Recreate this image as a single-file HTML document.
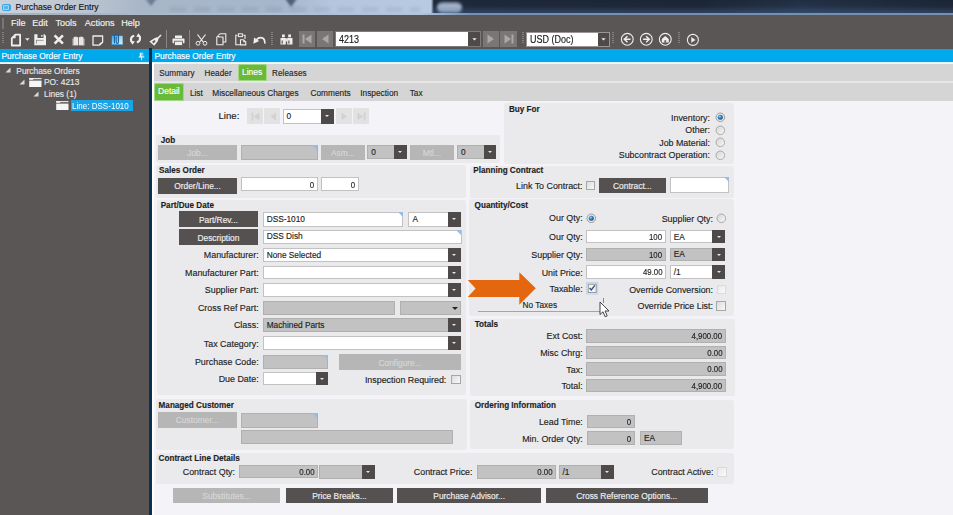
<!DOCTYPE html><html><head><meta charset="utf-8"><style>
html,body{margin:0;padding:0;width:953px;height:515px;overflow:hidden;background:#f3f3f8;font-family:"Liberation Sans",sans-serif;}
.a{position:absolute;}
.t{position:absolute;white-space:nowrap;font-family:"Liberation Sans",sans-serif;-webkit-text-stroke:0.15px currentColor;}
</style></head><body>
<div class="a" style="left:0.0px;top:0.0px;width:953.0px;height:15.0px;background:linear-gradient(90deg,#ccd2da 0px,#b8c2ce 100px,#a8b6c8 140px,#a6b6cc 275px,#aabbd2 300px,#b4c6de 330px,#b8cae2 431px,#1f2a3c 434px,#1d2737 700px,#25344a 800px,#1d2737 953px);"></div>
<svg class="a" style="left:136px;top:0px" width="180" height="14"><defs><filter id="tb" x="-50%" y="-50%" width="200%" height="200%"><feGaussianBlur stdDeviation="1.3"/></filter></defs><path d="M8 -3 L22 -3 L15 6 Z" fill="#56647a" opacity="0.7" filter="url(#tb)"/><path d="M148 -3 L162 -3 L155 7 Z" fill="#3c4a60" opacity="0.8" filter="url(#tb)"/></svg>
<div class="a" style="left:170px;top:6.5px;width:250px;height:5px;background:repeating-linear-gradient(90deg,rgba(70,85,110,0.10) 0px,rgba(70,85,110,0.10) 16px,rgba(0,0,0,0) 16px,rgba(0,0,0,0) 24px);filter:blur(1.5px);"></div>
<div class="a" style="left:437px;top:1.5px;width:25px;height:11px;background:#a2b2c8;border-radius:6px;filter:blur(1.5px);"></div>
<div class="a" style="left:433.0px;top:0.0px;width:520.0px;height:14.0px;background:linear-gradient(180deg,rgba(20,30,45,0.25) 0px,rgba(0,0,0,0) 6px,rgba(70,110,160,0.35) 12px);"></div>
<div class="a" style="left:0.0px;top:12.5px;width:953.0px;height:2.0px;background:linear-gradient(90deg,#a8b2be 0px,#b4c6dc 420px,#7890b0 470px,#7890b0 953px);"></div>
<div class="a" style="left:1.5px;top:3.8px;width:9.0px;height:7.7px;background:#38a6e6;border-radius:2px;"></div>
<div class="a" style="left:3.0px;top:5.3px;width:6.0px;height:4.7px;background:#9ed6f6;border-radius:1px;"></div>
<div class="a" style="left:3.8px;top:6.2px;width:4.4px;height:3.0px;background:#5ab4ea;"></div>
<div class="t" style="top:0.3px;height:14px;line-height:14px;font-size:8.6px;color:#141414;left:15.5px;">Purchase Order Entry</div>
<div class="a" style="left:0.0px;top:15.0px;width:953.0px;height:34.0px;background:#5a5656;"></div>
<div class="a" style="left:2.0px;top:18.0px;width:2.0px;height:11.0px;background:#7a7676;"></div>
<div class="t" style="top:15.8px;height:14px;line-height:14px;font-size:9.1px;color:#f2f2f2;left:11.0px;">File</div>
<div class="t" style="top:15.8px;height:14px;line-height:14px;font-size:9.1px;color:#f2f2f2;left:32.2px;">Edit</div>
<div class="t" style="top:15.8px;height:14px;line-height:14px;font-size:9.1px;color:#f2f2f2;left:55.4px;">Tools</div>
<div class="t" style="top:15.8px;height:14px;line-height:14px;font-size:9.1px;color:#f2f2f2;left:84.8px;">Actions</div>
<div class="t" style="top:15.8px;height:14px;line-height:14px;font-size:9.1px;color:#f2f2f2;left:121.2px;">Help</div>
<div class="a" style="left:0.0px;top:48.8px;width:148.7px;height:13.0px;background:#00a9ec;"></div>
<div class="a" style="left:0.0px;top:61.8px;width:148.7px;height:1.7px;background:#d2ecf8;"></div>
<div class="t" style="top:48.7px;height:14px;line-height:14px;font-size:8.4px;color:#ffffff;left:1.5px;">Purchase Order Entry</div>
<div class="a" style="left:148.7px;top:48.0px;width:3.3px;height:467.0px;background:#0b2f4f;"></div>
<div class="a" style="left:152.0px;top:48.8px;width:801.0px;height:13.0px;background:#00a9ec;"></div>
<div class="t" style="top:48.7px;height:14px;line-height:14px;font-size:8.4px;color:#ffffff;left:154.5px;">Purchase Order Entry</div>
<div class="a" style="left:0.0px;top:63.5px;width:148.7px;height:451.5px;background:#5a5656;"></div>
<div class="a" style="left:152.0px;top:61.8px;width:2.0px;height:453.2px;background:#ffffff;"></div>
<div class="a" style="left:152.0px;top:61.8px;width:801.0px;height:1.7px;background:#e4f2fa;"></div>
<div class="a" style="left:154.0px;top:63.5px;width:799.0px;height:17.5px;background:#d5d5d5;"></div>
<div class="a" style="left:154.0px;top:81.0px;width:799.0px;height:1.5px;background:#e6e6e6;"></div>
<div class="a" style="left:154.0px;top:82.5px;width:799.0px;height:18.0px;background:#d5d5d5;"></div>
<svg class="a" style="left:5.0px;top:67.3px" width="6" height="6"><path d="M5.5 0.5 L5.5 5.5 L0.5 5.5 Z" fill="#d8d8d8"/></svg>
<div class="t" style="top:63.5px;height:14px;line-height:14px;font-size:8.4px;color:#e6e6e6;left:16.3px;">Purchase Orders</div>
<svg class="a" style="left:18.8px;top:79.3px" width="6" height="6"><path d="M5.5 0.5 L5.5 5.5 L0.5 5.5 Z" fill="#d8d8d8"/></svg>
<svg class="a" style="left:28.5px;top:77.5px" width="13" height="10"><rect x="0.2" y="0" width="12.3" height="1.2" fill="#e4e4e4"/><rect x="0.2" y="0" width="4" height="1.8" fill="#f0f0f0"/><rect x="0.2" y="2.6" width="12.3" height="6.4" fill="#f6f6f6"/></svg>
<div class="t" style="top:75.3px;height:14px;line-height:14px;font-size:8.4px;color:#e6e6e6;left:44.0px;">PO: 4213</div>
<svg class="a" style="left:32.6px;top:90.8px" width="6" height="6"><path d="M5.5 0.5 L5.5 5.5 L0.5 5.5 Z" fill="#d8d8d8"/></svg>
<div class="t" style="top:87.0px;height:14px;line-height:14px;font-size:8.4px;color:#e6e6e6;left:44.0px;">Lines (1)</div>
<svg class="a" style="left:56.0px;top:101.0px" width="13" height="10"><rect x="0.2" y="0" width="12.3" height="1.2" fill="#e4e4e4"/><rect x="0.2" y="0" width="4" height="1.8" fill="#f0f0f0"/><rect x="0.2" y="2.6" width="12.3" height="6.4" fill="#f6f6f6"/></svg>
<div class="a" style="left:70.5px;top:100.2px;width:62.0px;height:10.8px;background:#1aa3e6;"></div>
<div class="t" style="top:98.6px;height:14px;line-height:14px;font-size:8.3px;color:#ffffff;transform:scaleX(0.97);transform-origin:left center;left:72.2px;-webkit-text-stroke:0;">Line: DSS-1010</div>
<svg class="a" style="left:137.5px;top:52px" width="7" height="9"><path d="M1.8 0.8 H5.2 V4.6 H6.3 V5.6 H3.9 V8.2 H3.1 V5.6 H0.7 V4.6 H1.8 Z" fill="#f4f4f4"/><rect x="3.6" y="1.2" width="1" height="3.2" fill="#00a9ec"/></svg>
<div class="t" style="top:66.6px;height:14px;line-height:14px;font-size:8.15px;color:#262626;left:159.2px;letter-spacing:0.1px;">Summary</div>
<div class="t" style="top:66.6px;height:14px;line-height:14px;font-size:8.15px;color:#262626;left:204.5px;letter-spacing:0.1px;">Header</div>
<div class="t" style="top:66.6px;height:14px;line-height:14px;font-size:8.15px;color:#262626;left:272.0px;letter-spacing:0.1px;">Releases</div>
<div class="a" style="left:237.5px;top:63.5px;width:29.1px;height:17.6px;background:#68ba38;border-radius:2.5px;box-shadow:inset 0 0 0 1px #a0d884;"></div>
<div class="t" style="top:65.0px;height:14px;line-height:14px;font-size:8.5px;color:#ffffff;left:152.1px;width:200px;text-align:center;">Lines</div>
<div class="a" style="left:154.0px;top:82.6px;width:29.8px;height:18.0px;background:#68ba38;border-radius:2.5px;box-shadow:inset 0 0 0 1px #a0d884;"></div>
<div class="t" style="top:84.3px;height:14px;line-height:14px;font-size:8.5px;color:#ffffff;left:68.9px;width:200px;text-align:center;">Detail</div>
<div class="t" style="top:86.2px;height:14px;line-height:14px;font-size:8.3px;color:#262626;left:189.9px;">List</div>
<div class="t" style="top:86.2px;height:14px;line-height:14px;font-size:8.3px;color:#262626;left:212.3px;">Miscellaneous Charges</div>
<div class="t" style="top:86.2px;height:14px;line-height:14px;font-size:8.3px;color:#262626;left:310.5px;">Comments</div>
<div class="t" style="top:86.2px;height:14px;line-height:14px;font-size:8.3px;color:#262626;left:360.3px;">Inspection</div>
<div class="t" style="top:86.2px;height:14px;line-height:14px;font-size:8.3px;color:#262626;left:409.7px;">Tax</div>
<div class="t" style="top:108.9px;height:14px;line-height:14px;font-size:9.6px;color:#202020;right:713.7px;text-align:right;">Line:</div>
<div class="a" style="left:246.5px;top:108.4px;width:16.3px;height:15.2px;background:#e2e2e2;"></div>
<svg class="a" style="left:250.5px;top:111.5px" width="9" height="9" viewBox="0 0 9 9"><rect x="0.5" y="0.5" width="1.8" height="8" fill="#d2d2d2"/><path d="M8.5 0.5 V8.5 L2.8 4.5 Z" fill="#d2d2d2"/></svg>
<div class="a" style="left:264.0px;top:108.4px;width:16.4px;height:15.2px;background:#e2e2e2;"></div>
<svg class="a" style="left:268.5px;top:111.5px" width="9" height="9" viewBox="0 0 9 9"><path d="M7 0.5 V8.5 L1.5 4.5 Z" fill="#d2d2d2"/></svg>
<div class="a" style="left:282.5px;top:108.5px;width:51.1px;height:15.1px;background:#ffffff;box-sizing:border-box;border:1px solid #c2c2c2;"></div>
<div class="t" style="top:109.0px;height:14px;line-height:14px;font-size:8.3px;color:#1e1e1e;left:286.5px;">0</div>
<div class="a" style="left:321.0px;top:108.5px;width:12.6px;height:15.1px;background:#4e4a4a;"></div>
<div class="a" style="left:325.0px;top:115.1px;width:0;height:0;border-left:2.3px solid transparent;border-right:2.3px solid transparent;border-top:2.5px solid #e8e8e8;"></div>
<div class="a" style="left:335.7px;top:108.4px;width:16.3px;height:15.2px;background:#e2e2e2;"></div>
<svg class="a" style="left:340px;top:111.5px" width="9" height="9" viewBox="0 0 9 9"><path d="M1.5 0.5 V8.5 L7 4.5 Z" fill="#d2d2d2"/></svg>
<div class="a" style="left:353.3px;top:108.4px;width:15.7px;height:15.2px;background:#e2e2e2;"></div>
<svg class="a" style="left:357px;top:111.5px" width="9" height="9" viewBox="0 0 9 9"><path d="M0.5 0.5 V8.5 L6.2 4.5 Z" fill="#d2d2d2"/><rect x="6.7" y="0.5" width="1.8" height="8" fill="#d2d2d2"/></svg>
<div class="a" style="left:156.3px;top:134.6px;width:344.0px;height:28.4px;background:#eaeaed;border-radius:3px;"></div>
<div class="t" style="top:133.5px;height:14px;line-height:14px;font-size:8.15px;color:#1e1e1e;font-weight:bold;left:160.7px;">Job</div>
<div class="a" style="left:157.9px;top:144.6px;width:79.2px;height:15.7px;background:#b6b6b6;"></div>
<div class="t" style="top:146.0px;height:14px;line-height:14px;font-size:8.4px;color:#d6d6d6;left:97.5px;width:200px;text-align:center;">Job...</div>
<div class="a" style="left:241.3px;top:144.6px;width:76.6px;height:15.7px;background:#c2c2c2;box-sizing:border-box;border:1px solid #b0b0b0;"></div>
<div class="a" style="left:312.4px;top:144.6px;width:0;height:0;border-left:5.5px solid transparent;border-top:5.5px solid #98bce2;"></div>
<div class="a" style="left:321.0px;top:144.6px;width:43.6px;height:15.7px;background:#b6b6b6;"></div>
<div class="t" style="top:146.0px;height:14px;line-height:14px;font-size:8.4px;color:#d6d6d6;left:242.8px;width:200px;text-align:center;">Asm...</div>
<div class="a" style="left:367.3px;top:145.1px;width:39.4px;height:14.4px;background:#c2c2c2;box-sizing:border-box;border:1px solid #b0b0b0;"></div>
<div class="t" style="top:145.3px;height:14px;line-height:14px;font-size:8.3px;color:#1e1e1e;left:371.3px;">0</div>
<div class="a" style="left:394.1px;top:145.1px;width:12.6px;height:14.4px;background:#4e4a4a;"></div>
<div class="a" style="left:398.1px;top:151.4px;width:0;height:0;border-left:2.3px solid transparent;border-right:2.3px solid transparent;border-top:2.5px solid #e8e8e8;"></div>
<div class="a" style="left:409.8px;top:144.6px;width:44.1px;height:15.9px;background:#b6b6b6;"></div>
<div class="t" style="top:146.2px;height:14px;line-height:14px;font-size:8.4px;color:#d6d6d6;left:331.9px;width:200px;text-align:center;">Mtl...</div>
<div class="a" style="left:457.0px;top:145.1px;width:39.4px;height:14.4px;background:#c2c2c2;box-sizing:border-box;border:1px solid #b0b0b0;"></div>
<div class="t" style="top:145.3px;height:14px;line-height:14px;font-size:8.3px;color:#1e1e1e;left:461.0px;">0</div>
<div class="a" style="left:483.8px;top:145.1px;width:12.6px;height:14.4px;background:#4e4a4a;"></div>
<div class="a" style="left:487.8px;top:151.4px;width:0;height:0;border-left:2.3px solid transparent;border-right:2.3px solid transparent;border-top:2.5px solid #e8e8e8;"></div>
<div class="a" style="left:503.8px;top:103.0px;width:230.2px;height:60.7px;background:#eaeaed;border-radius:3px;"></div>
<div class="t" style="top:102.5px;height:14px;line-height:14px;font-size:8.15px;color:#1e1e1e;font-weight:bold;left:509.0px;">Buy For</div>
<div class="t" style="top:110.9px;height:14px;line-height:14px;font-size:8.9px;color:#1e1e1e;right:243.0px;text-align:right;">Inventory:</div>
<svg class="a" style="left:715.0px;top:112.4px" width="10.6" height="10.6"><defs><radialGradient id="rg720" cx="0.4" cy="0.35" r="0.7"><stop offset="0" stop-color="#9fd4f6"/><stop offset="0.5" stop-color="#2a7fc0"/><stop offset="1" stop-color="#143e6c"/></radialGradient></defs><circle cx="5.3" cy="5.3" r="4.3" fill="#e6e6e6" stroke="#8c8c8c" stroke-width="0.8"/><circle cx="5.3" cy="5.3" r="2.5" fill="url(#rg720)"/></svg>
<div class="t" style="top:123.2px;height:14px;line-height:14px;font-size:8.9px;color:#1e1e1e;right:243.0px;text-align:right;">Other:</div>
<svg class="a" style="left:715.0px;top:124.7px" width="10.6" height="10.6"><defs><linearGradient id="rgo720_130" x1="0" y1="0" x2="1" y2="1"><stop offset="0" stop-color="#d4d4d4"/><stop offset="1" stop-color="#f8f8f8"/></linearGradient></defs><circle cx="5.3" cy="5.3" r="4.3" fill="url(#rgo720_130)" stroke="#9a9a9a" stroke-width="0.8"/></svg>
<div class="t" style="top:135.7px;height:14px;line-height:14px;font-size:8.9px;color:#1e1e1e;right:243.0px;text-align:right;">Job Material:</div>
<svg class="a" style="left:715.0px;top:137.2px" width="10.6" height="10.6"><defs><linearGradient id="rgo720_142" x1="0" y1="0" x2="1" y2="1"><stop offset="0" stop-color="#d4d4d4"/><stop offset="1" stop-color="#f8f8f8"/></linearGradient></defs><circle cx="5.3" cy="5.3" r="4.3" fill="url(#rgo720_142)" stroke="#9a9a9a" stroke-width="0.8"/></svg>
<div class="t" style="top:148.3px;height:14px;line-height:14px;font-size:8.9px;color:#1e1e1e;right:243.0px;text-align:right;">Subcontract Operation:</div>
<svg class="a" style="left:715.0px;top:149.8px" width="10.6" height="10.6"><defs><linearGradient id="rgo720_155" x1="0" y1="0" x2="1" y2="1"><stop offset="0" stop-color="#d4d4d4"/><stop offset="1" stop-color="#f8f8f8"/></linearGradient></defs><circle cx="5.3" cy="5.3" r="4.3" fill="url(#rgo720_155)" stroke="#9a9a9a" stroke-width="0.8"/></svg>
<div class="a" style="left:156.3px;top:165.0px;width:309.9px;height:32.6px;background:#eaeaed;border-radius:3px;"></div>
<div class="t" style="top:164.2px;height:14px;line-height:14px;font-size:8.15px;color:#1e1e1e;font-weight:bold;left:159.1px;">Sales Order</div>
<div class="a" style="left:157.9px;top:178.0px;width:79.2px;height:15.6px;background:#555151;"></div>
<div class="t" style="top:179.4px;height:14px;line-height:14px;font-size:8.4px;color:#f0f0f0;left:97.5px;width:200px;text-align:center;">Order/Line...</div>
<div class="a" style="left:241.3px;top:177.4px;width:76.6px;height:13.9px;background:#ffffff;box-sizing:border-box;border:1px solid #c2c2c2;"></div>
<div class="t" style="top:177.7px;height:14px;line-height:14px;font-size:9.0px;color:#1e1e1e;transform:scaleX(0.87);transform-origin:right center;right:638.6px;text-align:right;">0</div>
<div class="a" style="left:321.0px;top:177.4px;width:38.0px;height:13.9px;background:#ffffff;box-sizing:border-box;border:1px solid #c2c2c2;"></div>
<div class="t" style="top:177.7px;height:14px;line-height:14px;font-size:9.0px;color:#1e1e1e;transform:scaleX(0.87);transform-origin:right center;right:597.5px;text-align:right;">0</div>
<div class="a" style="left:470.2px;top:166.0px;width:263.8px;height:31.6px;background:#eaeaed;border-radius:3px;"></div>
<div class="t" style="top:164.1px;height:14px;line-height:14px;font-size:8.15px;color:#1e1e1e;font-weight:bold;left:473.3px;">Planning Contract</div>
<div class="t" style="top:178.6px;height:14px;line-height:14px;font-size:8.9px;color:#1e1e1e;right:370.5px;text-align:right;">Link To Contract:</div>
<div class="a" style="left:585.6px;top:180.8px;width:9.5px;height:9.5px;box-sizing:border-box;border:1px solid #a6a6a6;background:linear-gradient(135deg,#dcdcdc,#f8f8f8);"></div>
<div class="a" style="left:599.1px;top:177.6px;width:66.6px;height:15.9px;background:#555151;"></div>
<div class="t" style="top:179.2px;height:14px;line-height:14px;font-size:8.4px;color:#f0f0f0;left:532.4px;width:200px;text-align:center;">Contract...</div>
<div class="a" style="left:670.1px;top:177.2px;width:59.2px;height:15.6px;background:#ffffff;box-sizing:border-box;border:1px solid #c2c2c2;"></div>
<div class="a" style="left:723.8px;top:177.2px;width:0;height:0;border-left:5.5px solid transparent;border-top:5.5px solid #98bce2;"></div>
<div class="a" style="left:157.0px;top:199.6px;width:309.1px;height:195.9px;background:#eaeaed;border-radius:3px;"></div>
<div class="t" style="top:199.3px;height:14px;line-height:14px;font-size:8.15px;color:#1e1e1e;font-weight:bold;left:160.7px;">Part/Due Date</div>
<div class="a" style="left:178.9px;top:211.3px;width:79.1px;height:15.7px;background:#555151;"></div>
<div class="t" style="top:212.8px;height:14px;line-height:14px;font-size:8.4px;color:#f0f0f0;left:118.4px;width:200px;text-align:center;">Part/Rev...</div>
<div class="a" style="left:178.9px;top:229.0px;width:79.1px;height:16.0px;background:#555151;"></div>
<div class="t" style="top:230.6px;height:14px;line-height:14px;font-size:8.4px;color:#f0f0f0;left:118.4px;width:200px;text-align:center;">Description</div>
<div class="a" style="left:262.7px;top:212.0px;width:140.8px;height:14.5px;background:#ffffff;box-sizing:border-box;border:1px solid #c2c2c2;"></div>
<div class="a" style="left:398.0px;top:212.0px;width:0;height:0;border-left:5.5px solid transparent;border-top:5.5px solid #98bce2;"></div>
<div class="t" style="top:212.2px;height:14px;line-height:14px;font-size:8.3px;color:#1e1e1e;left:266.7px;">DSS-1010</div>
<div class="a" style="left:408.4px;top:212.0px;width:52.6px;height:14.5px;background:#ffffff;box-sizing:border-box;border:1px solid #c2c2c2;"></div>
<div class="t" style="top:212.2px;height:14px;line-height:14px;font-size:8.3px;color:#1e1e1e;left:412.4px;">A</div>
<div class="a" style="left:448.4px;top:212.0px;width:12.6px;height:14.5px;background:#4e4a4a;"></div>
<div class="a" style="left:452.4px;top:218.3px;width:0;height:0;border-left:2.3px solid transparent;border-right:2.3px solid transparent;border-top:2.5px solid #e8e8e8;"></div>
<div class="a" style="left:262.7px;top:230.0px;width:198.9px;height:14.2px;background:#ffffff;box-sizing:border-box;border:1px solid #c2c2c2;"></div>
<div class="a" style="left:456.1px;top:230.0px;width:0;height:0;border-left:5.5px solid transparent;border-top:5.5px solid #98bce2;"></div>
<div class="t" style="top:229.2px;height:14px;line-height:14px;font-size:8.3px;color:#1e1e1e;left:266.7px;">DSS Dish</div>
<div class="t" style="top:248.1px;height:14px;line-height:14px;font-size:8.9px;color:#1e1e1e;right:694.4px;text-align:right;">Manufacturer:</div>
<div class="a" style="left:262.7px;top:247.9px;width:198.3px;height:13.7px;background:#ffffff;box-sizing:border-box;border:1px solid #c2c2c2;"></div>
<div class="t" style="top:247.8px;height:14px;line-height:14px;font-size:8.3px;color:#1e1e1e;left:266.7px;">None Selected</div>
<div class="a" style="left:448.4px;top:247.9px;width:12.6px;height:13.7px;background:#4e4a4a;"></div>
<div class="a" style="left:452.4px;top:253.8px;width:0;height:0;border-left:2.3px solid transparent;border-right:2.3px solid transparent;border-top:2.5px solid #e8e8e8;"></div>
<div class="t" style="top:265.5px;height:14px;line-height:14px;font-size:8.9px;color:#1e1e1e;right:694.4px;text-align:right;">Manufacturer Part:</div>
<div class="a" style="left:262.7px;top:265.6px;width:198.3px;height:13.9px;background:#ffffff;box-sizing:border-box;border:1px solid #c2c2c2;"></div>
<div class="a" style="left:448.4px;top:265.6px;width:12.6px;height:13.9px;background:#4e4a4a;"></div>
<div class="a" style="left:452.4px;top:271.7px;width:0;height:0;border-left:2.3px solid transparent;border-right:2.3px solid transparent;border-top:2.5px solid #e8e8e8;"></div>
<div class="t" style="top:283.4px;height:14px;line-height:14px;font-size:8.9px;color:#1e1e1e;right:694.4px;text-align:right;">Supplier Part:</div>
<div class="a" style="left:262.7px;top:283.2px;width:198.3px;height:13.6px;background:#ffffff;box-sizing:border-box;border:1px solid #c2c2c2;"></div>
<div class="a" style="left:448.4px;top:283.2px;width:12.6px;height:13.6px;background:#4e4a4a;"></div>
<div class="a" style="left:452.4px;top:289.1px;width:0;height:0;border-left:2.3px solid transparent;border-right:2.3px solid transparent;border-top:2.5px solid #e8e8e8;"></div>
<div class="t" style="top:301.2px;height:14px;line-height:14px;font-size:8.9px;color:#1e1e1e;right:694.4px;text-align:right;">Cross Ref Part:</div>
<div class="a" style="left:262.7px;top:300.7px;width:132.1px;height:14.3px;background:#c2c2c2;box-sizing:border-box;border:1px solid #b0b0b0;"></div>
<div class="a" style="left:400.3px;top:300.7px;width:60.7px;height:14.3px;background:#c2c2c2;box-sizing:border-box;border:1px solid #b0b0b0;"></div>
<div class="a" style="left:452.0px;top:306.9px;width:0;height:0;border-left:3px solid transparent;border-right:3px solid transparent;border-top:3px solid #222;"></div>
<div class="t" style="top:318.2px;height:14px;line-height:14px;font-size:8.9px;color:#1e1e1e;right:694.4px;text-align:right;">Class:</div>
<div class="a" style="left:262.7px;top:317.8px;width:198.3px;height:13.9px;background:#c2c2c2;box-sizing:border-box;border:1px solid #b0b0b0;"></div>
<div class="t" style="top:317.8px;height:14px;line-height:14px;font-size:8.3px;color:#1e1e1e;left:266.7px;">Machined Parts</div>
<div class="a" style="left:448.4px;top:317.8px;width:12.6px;height:13.9px;background:#4e4a4a;"></div>
<div class="a" style="left:452.4px;top:323.9px;width:0;height:0;border-left:2.3px solid transparent;border-right:2.3px solid transparent;border-top:2.5px solid #e8e8e8;"></div>
<div class="t" style="top:336.5px;height:14px;line-height:14px;font-size:8.9px;color:#1e1e1e;right:694.4px;text-align:right;">Tax Category:</div>
<div class="a" style="left:262.7px;top:335.8px;width:198.3px;height:14.2px;background:#ffffff;box-sizing:border-box;border:1px solid #c2c2c2;"></div>
<div class="a" style="left:448.4px;top:335.8px;width:12.6px;height:14.2px;background:#4e4a4a;"></div>
<div class="a" style="left:452.4px;top:342.0px;width:0;height:0;border-left:2.3px solid transparent;border-right:2.3px solid transparent;border-top:2.5px solid #e8e8e8;"></div>
<div class="t" style="top:355.3px;height:14px;line-height:14px;font-size:8.9px;color:#1e1e1e;right:694.4px;text-align:right;">Purchase Code:</div>
<div class="a" style="left:262.7px;top:355.1px;width:65.8px;height:13.7px;background:#c2c2c2;box-sizing:border-box;border:1px solid #b0b0b0;"></div>
<div class="a" style="left:323.0px;top:355.1px;width:0;height:0;border-left:5.5px solid transparent;border-top:5.5px solid #98bce2;"></div>
<div class="a" style="left:339.1px;top:354.1px;width:121.9px;height:15.9px;background:#b6b6b6;"></div>
<div class="t" style="top:355.7px;height:14px;line-height:14px;font-size:8.4px;color:#d6d6d6;left:300.1px;width:200px;text-align:center;">Configure...</div>
<div class="t" style="top:372.0px;height:14px;line-height:14px;font-size:8.9px;color:#1e1e1e;right:694.4px;text-align:right;">Due Date:</div>
<div class="a" style="left:262.7px;top:371.8px;width:65.8px;height:13.3px;background:#ffffff;box-sizing:border-box;border:1px solid #c2c2c2;"></div>
<div class="a" style="left:316.3px;top:371.8px;width:12.2px;height:13.3px;background:#4e4a4a;"></div>
<div class="a" style="left:320.1px;top:377.6px;width:0;height:0;border-left:2.3px solid transparent;border-right:2.3px solid transparent;border-top:2.5px solid #e8e8e8;"></div>
<div class="t" style="top:373.2px;height:14px;line-height:14px;font-size:8.9px;color:#1e1e1e;right:506.7px;text-align:right;">Inspection Required:</div>
<div class="a" style="left:451.2px;top:374.9px;width:9.5px;height:9.5px;box-sizing:border-box;border:1px solid #a6a6a6;background:linear-gradient(135deg,#dcdcdc,#f8f8f8);"></div>
<div class="a" style="left:468.5px;top:199.0px;width:265.7px;height:117.4px;background:#eaeaed;border-radius:3px;"></div>
<div class="t" style="top:199.2px;height:14px;line-height:14px;font-size:8.15px;color:#1e1e1e;font-weight:bold;left:474.6px;">Quantity/Cost</div>
<div class="t" style="top:211.0px;height:14px;line-height:14px;font-size:8.9px;color:#1e1e1e;right:370.4px;text-align:right;">Our Qty:</div>
<svg class="a" style="left:585.8px;top:212.7px" width="10.6" height="10.6"><defs><radialGradient id="rg591" cx="0.4" cy="0.35" r="0.7"><stop offset="0" stop-color="#9fd4f6"/><stop offset="0.5" stop-color="#2a7fc0"/><stop offset="1" stop-color="#143e6c"/></radialGradient></defs><circle cx="5.3" cy="5.3" r="4.3" fill="#e6e6e6" stroke="#8c8c8c" stroke-width="0.8"/><circle cx="5.3" cy="5.3" r="2.5" fill="url(#rg591)"/></svg>
<div class="t" style="top:211.5px;height:14px;line-height:14px;font-size:8.9px;color:#1e1e1e;right:240.0px;text-align:right;">Supplier Qty:</div>
<svg class="a" style="left:716.0px;top:213.2px" width="10.6" height="10.6"><defs><linearGradient id="rgo721_218" x1="0" y1="0" x2="1" y2="1"><stop offset="0" stop-color="#d4d4d4"/><stop offset="1" stop-color="#f8f8f8"/></linearGradient></defs><circle cx="5.3" cy="5.3" r="4.3" fill="url(#rgo721_218)" stroke="#9a9a9a" stroke-width="0.8"/></svg>
<div class="t" style="top:229.8px;height:14px;line-height:14px;font-size:8.9px;color:#1e1e1e;right:370.4px;text-align:right;">Our Qty:</div>
<div class="a" style="left:586.2px;top:230.3px;width:79.5px;height:13.2px;background:#ffffff;box-sizing:border-box;border:1px solid #c2c2c2;"></div>
<div class="t" style="top:230.2px;height:14px;line-height:14px;font-size:9.0px;color:#1e1e1e;transform:scaleX(0.87);transform-origin:right center;right:290.8px;text-align:right;">100</div>
<div class="a" style="left:669.8px;top:230.3px;width:55.4px;height:13.2px;background:#ffffff;box-sizing:border-box;border:1px solid #c2c2c2;"></div>
<div class="t" style="top:229.9px;height:14px;line-height:14px;font-size:8.3px;color:#1e1e1e;left:673.8px;">EA</div>
<div class="a" style="left:712.3px;top:230.3px;width:12.9px;height:13.2px;background:#4e4a4a;"></div>
<div class="a" style="left:716.5px;top:236.0px;width:0;height:0;border-left:2.3px solid transparent;border-right:2.3px solid transparent;border-top:2.5px solid #e8e8e8;"></div>
<div class="t" style="top:247.5px;height:14px;line-height:14px;font-size:8.9px;color:#1e1e1e;right:370.4px;text-align:right;">Supplier Qty:</div>
<div class="a" style="left:586.2px;top:247.7px;width:79.5px;height:13.5px;background:#c2c2c2;box-sizing:border-box;border:1px solid #b0b0b0;"></div>
<div class="t" style="top:247.8px;height:14px;line-height:14px;font-size:9.0px;color:#1e1e1e;transform:scaleX(0.87);transform-origin:right center;right:290.8px;text-align:right;">100</div>
<div class="a" style="left:669.8px;top:247.7px;width:55.4px;height:13.5px;background:#c2c2c2;box-sizing:border-box;border:1px solid #b0b0b0;"></div>
<div class="t" style="top:247.4px;height:14px;line-height:14px;font-size:8.3px;color:#1e1e1e;left:673.8px;">EA</div>
<div class="a" style="left:712.3px;top:247.7px;width:12.9px;height:13.5px;background:#4e4a4a;"></div>
<div class="a" style="left:716.5px;top:253.5px;width:0;height:0;border-left:2.3px solid transparent;border-right:2.3px solid transparent;border-top:2.5px solid #e8e8e8;"></div>
<div class="t" style="top:265.7px;height:14px;line-height:14px;font-size:8.9px;color:#1e1e1e;right:370.4px;text-align:right;">Unit Price:</div>
<div class="a" style="left:586.2px;top:265.2px;width:79.5px;height:13.8px;background:#ffffff;box-sizing:border-box;border:1px solid #c2c2c2;"></div>
<div class="t" style="top:265.4px;height:14px;line-height:14px;font-size:9.0px;color:#1e1e1e;transform:scaleX(0.87);transform-origin:right center;right:290.8px;text-align:right;">49.00</div>
<div class="a" style="left:669.8px;top:265.2px;width:55.4px;height:13.8px;background:#ffffff;box-sizing:border-box;border:1px solid #c2c2c2;"></div>
<div class="t" style="top:265.1px;height:14px;line-height:14px;font-size:8.3px;color:#1e1e1e;left:673.8px;">/1</div>
<div class="a" style="left:712.3px;top:265.2px;width:12.9px;height:13.8px;background:#4e4a4a;"></div>
<div class="a" style="left:716.5px;top:271.2px;width:0;height:0;border-left:2.3px solid transparent;border-right:2.3px solid transparent;border-top:2.5px solid #e8e8e8;"></div>
<div class="t" style="top:282.2px;height:14px;line-height:14px;font-size:8.9px;color:#1e1e1e;right:370.4px;text-align:right;">Taxable:</div>
<div class="t" style="top:282.7px;height:14px;line-height:14px;font-size:8.9px;color:#1e1e1e;right:240.0px;text-align:right;">Override Conversion:</div>
<div class="a" style="left:717.2px;top:285.2px;width:8.5px;height:8.5px;box-sizing:border-box;border:1px solid #dadada;background:linear-gradient(135deg,#e8e8e8,#fafafa);"></div>
<div class="t" style="top:298.5px;height:14px;line-height:14px;font-size:8.9px;color:#1e1e1e;right:240.0px;text-align:right;">Override Price List:</div>
<div class="a" style="left:716.4px;top:300.6px;width:10px;height:10px;box-sizing:border-box;border:1px solid #a6a6a6;background:linear-gradient(135deg,#dcdcdc,#f8f8f8);"></div>
<svg class="a" style="left:586px;top:282px" width="12.5" height="13"><rect x="0.6" y="0.6" width="11.2" height="11.6" fill="none" stroke="#8cc4f0" stroke-width="1" stroke-dasharray="1 1"/><rect x="2.2" y="2.2" width="8" height="8.4" fill="#f2f2f2" stroke="#8a8a8a" stroke-width="0.9"/><path d="M3.6 6 L5.3 8 L8.8 3.4" fill="none" stroke="#26508a" stroke-width="1.3"/></svg>
<div class="t" style="top:297.7px;height:14px;line-height:14px;font-size:8.3px;color:#1e1e1e;left:522.6px;">No Taxes</div>
<div class="a" style="left:477.5px;top:311.0px;width:125.7px;height:1.0px;background:#a4a4a4;"></div>
<div class="a" style="left:603.0px;top:298.0px;width:1.0px;height:5.0px;background:#8a8a8a;"></div>
<svg class="a" style="left:467px;top:271px" width="72" height="36"><path d="M0.8 9 L52.3 9 L52.3 1.3 L68.8 17.3 L52.3 33.8 L52.3 26 L0.8 26 L8.6 17.6 Z" fill="#e4660e"/></svg>
<svg class="a" style="left:599px;top:300.5px" width="12" height="18"><path d="M1 1 L1 13.5 L4 10.8 L6.2 15.8 L8.2 14.9 L6.1 10 L10 10 Z" fill="#ffffff" stroke="#303030" stroke-width="0.9" stroke-linejoin="round"/></svg>
<div class="a" style="left:470.3px;top:318.8px;width:264.4px;height:77.0px;background:#eaeaed;border-radius:3px;"></div>
<div class="t" style="top:317.6px;height:14px;line-height:14px;font-size:8.15px;color:#1e1e1e;font-weight:bold;left:474.7px;">Totals</div>
<div class="t" style="top:329.4px;height:14px;line-height:14px;font-size:8.9px;color:#1e1e1e;right:370.4px;text-align:right;">Ext Cost:</div>
<div class="a" style="left:586.3px;top:329.1px;width:139.6px;height:13.8px;background:#c2c2c2;box-sizing:border-box;border:1px solid #b0b0b0;"></div>
<div class="t" style="top:329.3px;height:14px;line-height:14px;font-size:9.0px;color:#1e1e1e;transform:scaleX(0.87);transform-origin:right center;right:230.6px;text-align:right;">4,900.00</div>
<div class="t" style="top:345.6px;height:14px;line-height:14px;font-size:8.9px;color:#1e1e1e;right:370.4px;text-align:right;">Misc Chrg:</div>
<div class="a" style="left:586.3px;top:345.8px;width:139.6px;height:13.6px;background:#c2c2c2;box-sizing:border-box;border:1px solid #b0b0b0;"></div>
<div class="t" style="top:345.9px;height:14px;line-height:14px;font-size:9.0px;color:#1e1e1e;transform:scaleX(0.87);transform-origin:right center;right:230.6px;text-align:right;">0.00</div>
<div class="t" style="top:362.6px;height:14px;line-height:14px;font-size:8.9px;color:#1e1e1e;right:370.4px;text-align:right;">Tax:</div>
<div class="a" style="left:586.3px;top:362.3px;width:139.6px;height:13.5px;background:#c2c2c2;box-sizing:border-box;border:1px solid #b0b0b0;"></div>
<div class="t" style="top:362.4px;height:14px;line-height:14px;font-size:9.0px;color:#1e1e1e;transform:scaleX(0.87);transform-origin:right center;right:230.6px;text-align:right;">0.00</div>
<div class="t" style="top:379.4px;height:14px;line-height:14px;font-size:8.9px;color:#1e1e1e;right:370.4px;text-align:right;">Total:</div>
<div class="a" style="left:586.3px;top:379.0px;width:139.6px;height:13.3px;background:#c2c2c2;box-sizing:border-box;border:1px solid #b0b0b0;"></div>
<div class="t" style="top:378.9px;height:14px;line-height:14px;font-size:9.0px;color:#1e1e1e;transform:scaleX(0.87);transform-origin:right center;right:230.6px;text-align:right;">4,900.00</div>
<div class="a" style="left:155.8px;top:399.2px;width:311.4px;height:50.5px;background:#eaeaed;border-radius:3px;"></div>
<div class="t" style="top:398.6px;height:14px;line-height:14px;font-size:8.15px;color:#1e1e1e;font-weight:bold;left:158.6px;">Managed Customer</div>
<div class="a" style="left:157.5px;top:412.0px;width:79.4px;height:15.6px;background:#b6b6b6;"></div>
<div class="t" style="top:413.4px;height:14px;line-height:14px;font-size:8.4px;color:#d6d6d6;left:97.2px;width:200px;text-align:center;">Customer...</div>
<div class="a" style="left:241.3px;top:413.2px;width:76.4px;height:14.4px;background:#c2c2c2;box-sizing:border-box;border:1px solid #b0b0b0;"></div>
<div class="a" style="left:312.2px;top:413.2px;width:0;height:0;border-left:5.5px solid transparent;border-top:5.5px solid #98bce2;"></div>
<div class="a" style="left:241.3px;top:430.4px;width:211.7px;height:14.0px;background:#c2c2c2;box-sizing:border-box;border:1px solid #b0b0b0;"></div>
<div class="a" style="left:470.0px;top:399.7px;width:263.8px;height:49.4px;background:#eaeaed;border-radius:3px;"></div>
<div class="t" style="top:399.2px;height:14px;line-height:14px;font-size:8.15px;color:#1e1e1e;font-weight:bold;left:474.8px;">Ordering Information</div>
<div class="t" style="top:414.8px;height:14px;line-height:14px;font-size:8.9px;color:#1e1e1e;right:370.2px;text-align:right;">Lead Time:</div>
<div class="a" style="left:586.5px;top:414.5px;width:48.2px;height:13.5px;background:#c2c2c2;box-sizing:border-box;border:1px solid #b0b0b0;"></div>
<div class="t" style="top:414.6px;height:14px;line-height:14px;font-size:9.0px;color:#1e1e1e;transform:scaleX(0.87);transform-origin:right center;right:321.8px;text-align:right;">0</div>
<div class="t" style="top:431.5px;height:14px;line-height:14px;font-size:8.9px;color:#1e1e1e;right:370.2px;text-align:right;">Min. Order Qty:</div>
<div class="a" style="left:586.5px;top:431.2px;width:48.2px;height:14.2px;background:#c2c2c2;box-sizing:border-box;border:1px solid #b0b0b0;"></div>
<div class="t" style="top:431.6px;height:14px;line-height:14px;font-size:9.0px;color:#1e1e1e;transform:scaleX(0.87);transform-origin:right center;right:321.8px;text-align:right;">0</div>
<div class="a" style="left:640.0px;top:431.2px;width:41.9px;height:14.2px;background:#c2c2c2;box-sizing:border-box;border:1px solid #b0b0b0;"></div>
<div class="t" style="top:431.3px;height:14px;line-height:14px;font-size:8.3px;color:#1e1e1e;left:644.0px;">EA</div>
<div class="a" style="left:155.8px;top:453.2px;width:578.0px;height:30.8px;background:#eaeaed;border-radius:3px;"></div>
<div class="t" style="top:452.1px;height:14px;line-height:14px;font-size:8.15px;color:#1e1e1e;font-weight:bold;left:158.6px;">Contract Line Details</div>
<div class="t" style="top:464.9px;height:14px;line-height:14px;font-size:8.9px;color:#1e1e1e;right:718.0px;text-align:right;">Contract Qty:</div>
<div class="a" style="left:238.5px;top:464.9px;width:79.2px;height:13.5px;background:#c2c2c2;box-sizing:border-box;border:1px solid #b0b0b0;"></div>
<div class="t" style="top:464.9px;height:14px;line-height:14px;font-size:9.0px;color:#1e1e1e;transform:scaleX(0.87);transform-origin:right center;right:638.8px;text-align:right;">0.00</div>
<div class="a" style="left:319.3px;top:464.9px;width:55.7px;height:13.9px;background:#c2c2c2;box-sizing:border-box;border:1px solid #b0b0b0;"></div>
<div class="a" style="left:362.4px;top:464.9px;width:12.6px;height:13.9px;background:#4e4a4a;"></div>
<div class="a" style="left:366.4px;top:471.0px;width:0;height:0;border-left:2.3px solid transparent;border-right:2.3px solid transparent;border-top:2.5px solid #e8e8e8;"></div>
<div class="t" style="top:464.8px;height:14px;line-height:14px;font-size:8.9px;color:#1e1e1e;right:480.5px;text-align:right;">Contract Price:</div>
<div class="a" style="left:477.3px;top:464.9px;width:78.7px;height:14.1px;background:#c2c2c2;box-sizing:border-box;border:1px solid #b0b0b0;"></div>
<div class="t" style="top:465.2px;height:14px;line-height:14px;font-size:9.0px;color:#1e1e1e;transform:scaleX(0.87);transform-origin:right center;right:400.5px;text-align:right;">0.00</div>
<div class="a" style="left:558.5px;top:464.9px;width:55.7px;height:14.1px;background:#c2c2c2;box-sizing:border-box;border:1px solid #b0b0b0;"></div>
<div class="t" style="top:464.9px;height:14px;line-height:14px;font-size:8.3px;color:#1e1e1e;left:562.5px;">/1</div>
<div class="a" style="left:601.0px;top:464.9px;width:13.2px;height:14.1px;background:#4e4a4a;"></div>
<div class="a" style="left:605.3px;top:471.1px;width:0;height:0;border-left:2.3px solid transparent;border-right:2.3px solid transparent;border-top:2.5px solid #e8e8e8;"></div>
<div class="t" style="top:464.5px;height:14px;line-height:14px;font-size:8.9px;color:#1e1e1e;right:239.6px;text-align:right;">Contract Active:</div>
<div class="a" style="left:716.5px;top:466.5px;width:10px;height:10px;box-sizing:border-box;border:1px solid #dadada;background:linear-gradient(135deg,#e8e8e8,#fafafa);"></div>
<div class="a" style="left:172.8px;top:487.8px;width:107.2px;height:15.6px;background:#b6b6b6;"></div>
<div class="t" style="top:489.2px;height:14px;line-height:14px;font-size:8.4px;color:#d6d6d6;left:126.4px;width:200px;text-align:center;">Substitutes...</div>
<div class="a" style="left:285.5px;top:487.8px;width:107.7px;height:15.6px;background:#555151;"></div>
<div class="t" style="top:489.2px;height:14px;line-height:14px;font-size:8.4px;color:#f0f0f0;left:239.4px;width:200px;text-align:center;">Price Breaks...</div>
<div class="a" style="left:397.3px;top:487.8px;width:143.9px;height:15.6px;background:#555151;"></div>
<div class="t" style="top:489.2px;height:14px;line-height:14px;font-size:8.4px;color:#f0f0f0;left:369.2px;width:200px;text-align:center;">Purchase Advisor...</div>
<div class="a" style="left:545.6px;top:487.8px;width:162.1px;height:15.6px;background:#555151;"></div>
<div class="t" style="top:489.2px;height:14px;line-height:14px;font-size:8.4px;color:#f0f0f0;left:526.7px;width:200px;text-align:center;">Cross Reference Options...</div>
<div class="a" style="left:2.4px;top:32.4px;width:2.0px;height:1.0px;background:#858181;"></div>
<div class="a" style="left:2.4px;top:34.4px;width:2.0px;height:1.0px;background:#858181;"></div>
<div class="a" style="left:2.4px;top:36.4px;width:2.0px;height:1.0px;background:#858181;"></div>
<div class="a" style="left:2.4px;top:38.4px;width:2.0px;height:1.0px;background:#858181;"></div>
<div class="a" style="left:2.4px;top:40.4px;width:2.0px;height:1.0px;background:#858181;"></div>
<div class="a" style="left:2.4px;top:42.4px;width:2.0px;height:1.0px;background:#858181;"></div>
<svg class="a" style="left:9.5px;top:32.5px" width="12" height="14" viewBox="0 0 12 14"><path d="M5.4 1.6 H10.1 V12.5 H1.8 V5.3 Z" fill="none" stroke="#eeeeee" stroke-width="1.8" stroke-linejoin="round"/><path d="M5.6 1.6 L1.8 5.3 L5.6 5.3 Z" fill="#eeeeee"/></svg>
<svg class="a" style="left:24.5px;top:37.5px" width="5" height="3" viewBox="0 0 5 3"><path d="M0.1 0.2 H4.6 L2.35 2.8 Z" fill="#eeeeee"/></svg>
<svg class="a" style="left:33.5px;top:34px" width="13" height="12" viewBox="0 0 13 12"><path d="M0.3 0.3 H10.5 L12 1.8 V11.3 H0.3 Z" fill="#eeeeee"/><rect x="3.5" y="0" width="6" height="4" fill="#5a5656"/><rect x="7.1" y="1" width="1.4" height="1.6" fill="#eeeeee"/><rect x="2" y="5.9" width="7.5" height="0.8" fill="#8a8686"/><rect x="2" y="5.9" width="0.8" height="3.8" fill="#8a8686"/></svg>
<svg class="a" style="left:53px;top:34px" width="11.5" height="11" viewBox="0 0 11.5 11"><path d="M1.6 1.4 L9.9 9.6 M9.9 1.4 L1.6 9.6" stroke="#eeeeee" stroke-width="2.6"/></svg>
<svg class="a" style="left:71.5px;top:35.5px" width="13" height="10" viewBox="0 0 13 10"><path d="M0.5 2.6 L1.5 2.6 L1.5 1 Q4 0 6.2 1.2 V9.6 H0.5 Z M6.8 1.2 Q9 0 11.5 1 L11.5 2.6 L12.5 2.6 V9.6 H6.8 Z" fill="#bdbdbd"/><path d="M2.2 1.3 Q4 0.6 5.8 1.6 V9 H2.2 Z M7.2 1.6 Q9 0.6 10.8 1.3 V9 H7.2 Z" fill="#f4f4f4"/><path d="M4 1 V9 M9 1 V9" stroke="#c8c8c8" stroke-width="0.7"/></svg>
<svg class="a" style="left:91.5px;top:34.5px" width="12" height="11" viewBox="0 0 12 11"><path d="M1 1 H10.6 V7.2 L7.4 10.2 H1 Z" fill="none" stroke="#eeeeee" stroke-width="1.3" stroke-linejoin="round"/><path d="M10.6 7.4 L7.8 7.8 L7.4 10.2 Z" fill="#eeeeee"/></svg>
<svg class="a" style="left:110.5px;top:33px" width="12.5" height="13" viewBox="0 0 12.5 13"><defs><linearGradient id="ag" x1="0" y1="0" x2="1" y2="1"><stop offset="0" stop-color="#3aa6e8"/><stop offset="0.6" stop-color="#a8dcf8"/><stop offset="1" stop-color="#e8f6fe"/></linearGradient></defs><rect x="0.8" y="2.8" width="10.8" height="9.2" fill="url(#ag)"/><rect x="0.8" y="11.2" width="10.8" height="0.9" fill="#2a8ad0"/><path d="M3.4 10.6 V3 Q3.4 0.7 5.4 0.7 Q7.4 0.7 7.4 3 V9 Q7.4 10.4 6.3 10.4 Q5.2 10.4 5.2 9 V3.8" fill="none" stroke="#1a5e9c" stroke-width="1.1"/></svg>
<svg class="a" style="left:129px;top:33.3px" width="13" height="12" viewBox="0 0 13 12"><path d="M5.2 2.8 A3.8 3.8 0 0 0 3.8 9.8" fill="none" stroke="#eeeeee" stroke-width="2.1"/><path d="M7.8 9.2 A3.8 3.8 0 0 0 9.2 2.2" fill="none" stroke="#eeeeee" stroke-width="2.1"/><path d="M1.2 8 L5.8 8.2 L3.6 11.8 Z M11.8 4 L7.2 3.8 L9.4 0.2 Z" fill="#eeeeee"/></svg>
<svg class="a" style="left:148.5px;top:33.5px" width="13" height="12.5" viewBox="0 0 13 12.5"><path d="M12 0.9 L7.8 5.2" stroke="#eeeeee" stroke-width="1.5"/><path d="M6.2 3.8 L9.2 6.8 L5.2 11.8 L0.4 7.4 Z" fill="#eeeeee"/><path d="M3 7.8 L5.6 6 L6.6 7 L4.6 9.6 Z" fill="#5a5656"/><rect x="6.2" y="3.6" width="3" height="3" transform="rotate(45 7.7 5.1)" fill="#eeeeee"/></svg>
<div class="a" style="left:165.7px;top:30.0px;width:1.0px;height:18.0px;background:#8a8686;"></div>
<svg class="a" style="left:171.5px;top:34.5px" width="13" height="11" viewBox="0 0 13 11"><rect x="3" y="0.5" width="7" height="2.5" fill="#eeeeee"/><rect x="0.5" y="3.6" width="12" height="4.6" rx="0.8" fill="#eeeeee"/><rect x="2.6" y="6.2" width="7.8" height="4.3" fill="#eeeeee" stroke="#5a5656" stroke-width="0.8"/></svg>
<div class="a" style="left:189.4px;top:30.0px;width:1.0px;height:18.0px;background:#8a8686;"></div>
<svg class="a" style="left:195px;top:34px" width="13" height="12" viewBox="0 0 13 12"><path d="M2.5 0.5 L8.2 8 M10.5 0.5 L4.8 8" stroke="#eeeeee" stroke-width="1.2"/><circle cx="3" cy="9.3" r="1.9" fill="none" stroke="#eeeeee" stroke-width="1"/><circle cx="10" cy="9.3" r="1.9" fill="none" stroke="#eeeeee" stroke-width="1"/></svg>
<svg class="a" style="left:215.5px;top:33px" width="11" height="13" viewBox="0 0 11 13"><path d="M3.8 0.8 H9.8 V9 H7 M2 3 L0.8 4.2 V11.8 H7 V4 H3 Z" fill="none" stroke="#eeeeee" stroke-width="1.1" stroke-linejoin="round"/><path d="M3.8 0.8 L2.3 2.5" stroke="#eeeeee" stroke-width="1.1"/></svg>
<svg class="a" style="left:234.5px;top:33px" width="12" height="13" viewBox="0 0 12 13"><path d="M2.5 2.3 H0.8 V11.8 H5 M8.3 2.3 H10 V6" fill="none" stroke="#eeeeee" stroke-width="1.1"/><rect x="3.4" y="0.8" width="4" height="2.8" fill="none" stroke="#eeeeee" stroke-width="1"/><path d="M5.5 6.8 H8.5 L10.8 9 V11.9 H5.5 Z" fill="none" stroke="#eeeeee" stroke-width="1.1"/><path d="M8.2 7 V9.3 H10.6" fill="#eeeeee"/></svg>
<svg class="a" style="left:252.5px;top:35.5px" width="13" height="9" viewBox="0 0 13 9"><path d="M3.3 3.8 Q6.5 0.6 10 2.2 Q12 3.4 11.8 7.6" fill="none" stroke="#eeeeee" stroke-width="1.6"/><path d="M0.4 7.8 L1 1.6 L6.2 5 Z" fill="#eeeeee"/></svg>
<div class="a" style="left:271.4px;top:32.0px;width:2.0px;height:1.0px;background:#858181;"></div>
<div class="a" style="left:271.4px;top:34.0px;width:2.0px;height:1.0px;background:#858181;"></div>
<div class="a" style="left:271.4px;top:36.0px;width:2.0px;height:1.0px;background:#858181;"></div>
<div class="a" style="left:271.4px;top:38.0px;width:2.0px;height:1.0px;background:#858181;"></div>
<div class="a" style="left:271.4px;top:40.0px;width:2.0px;height:1.0px;background:#858181;"></div>
<div class="a" style="left:271.4px;top:42.0px;width:2.0px;height:1.0px;background:#858181;"></div>
<div class="a" style="left:271.4px;top:44.0px;width:2.0px;height:1.0px;background:#858181;"></div>
<svg class="a" style="left:280px;top:34px" width="13" height="11" viewBox="0 0 13 11"><rect x="2" y="0.5" width="2.8" height="2.8" fill="#eeeeee"/><rect x="8.2" y="0.5" width="2.8" height="2.8" fill="#eeeeee"/><path d="M0.5 4 H5.8 V10.5 H0.5 Z M7.2 4 H12.5 V10.5 H7.2 Z" fill="#eeeeee"/><rect x="5.5" y="4.5" width="2" height="3" fill="#eeeeee"/><rect x="1.6" y="6.5" width="1.2" height="3.2" fill="#5a5656"/><rect x="8.3" y="6.5" width="1.2" height="3.2" fill="#5a5656"/></svg>
<div class="a" style="left:298.7px;top:31.3px;width:16.4px;height:16.0px;background:#7a7676;"></div>
<svg class="a" style="left:302px;top:34px" width="10" height="10" viewBox="0 0 10 10"><rect x="0.5" y="0.5" width="2" height="9" fill="#a9a7a7"/><path d="M9.5 0.5 V9.5 L3 5 Z" fill="#a9a7a7"/></svg>
<div class="a" style="left:316.7px;top:31.3px;width:16.2px;height:16.0px;background:#7a7676;"></div>
<svg class="a" style="left:320px;top:34px" width="10" height="10" viewBox="0 0 10 10"><path d="M8.5 0.5 V9.5 L2 5 Z" fill="#a9a7a7"/></svg>
<div class="a" style="left:334.7px;top:31.3px;width:146.5px;height:16px;box-sizing:border-box;border:1px solid #7e7a7a;background:#fff"></div>
<div class="a" style="left:468.1px;top:32.3px;width:12.1px;height:14.0px;background:#4e4a4a;"></div>
<svg class="a" style="left:471.7px;top:38px" width="5" height="3.5" viewBox="0 0 5 3.5"><path d="M0.3 0.3 H4.7 L2.5 2.6 Z" fill="#eeeeee"/></svg>
<div class="t" style="top:32.8px;height:14px;line-height:14px;font-size:10px;color:#202020;transform:scaleX(0.9);transform-origin:left center;left:339.4px;">4213</div>
<div class="a" style="left:483.0px;top:31.3px;width:15.8px;height:16.0px;background:#7a7676;"></div>
<svg class="a" style="left:486px;top:34px" width="10" height="10" viewBox="0 0 10 10"><path d="M1.5 0.5 V9.5 L8 5 Z" fill="#a9a7a7"/></svg>
<div class="a" style="left:500.3px;top:31.3px;width:16.3px;height:16.0px;background:#7a7676;"></div>
<svg class="a" style="left:503.5px;top:34px" width="10" height="10" viewBox="0 0 10 10"><path d="M0.5 0.5 V9.5 L7 5 Z" fill="#a9a7a7"/><rect x="7.5" y="0.5" width="2" height="9" fill="#a9a7a7"/></svg>
<div class="a" style="left:521.8px;top:32.2px;width:2.0px;height:1.0px;background:#858181;"></div>
<div class="a" style="left:521.8px;top:34.2px;width:2.0px;height:1.0px;background:#858181;"></div>
<div class="a" style="left:521.8px;top:36.2px;width:2.0px;height:1.0px;background:#858181;"></div>
<div class="a" style="left:521.8px;top:38.2px;width:2.0px;height:1.0px;background:#858181;"></div>
<div class="a" style="left:521.8px;top:40.2px;width:2.0px;height:1.0px;background:#858181;"></div>
<div class="a" style="left:521.8px;top:42.2px;width:2.0px;height:1.0px;background:#858181;"></div>
<div class="a" style="left:526.4px;top:31.8px;width:83.6px;height:15.1px;box-sizing:border-box;border:1px solid #9a9696;background:#fff"></div>
<div class="a" style="left:597.8px;top:32.8px;width:11.2px;height:13.1px;background:#4e4a4a;"></div>
<svg class="a" style="left:601px;top:38px" width="5" height="3.5" viewBox="0 0 5 3.5"><path d="M0.3 0.3 H4.7 L2.5 2.6 Z" fill="#eeeeee"/></svg>
<div class="t" style="top:32.8px;height:14px;line-height:14px;font-size:10px;color:#202020;transform:scaleX(0.9);transform-origin:left center;left:530.0px;">USD (Doc)</div>
<div class="a" style="left:612.4px;top:32.2px;width:2.0px;height:1.0px;background:#858181;"></div>
<div class="a" style="left:612.4px;top:34.2px;width:2.0px;height:1.0px;background:#858181;"></div>
<div class="a" style="left:612.4px;top:36.2px;width:2.0px;height:1.0px;background:#858181;"></div>
<div class="a" style="left:612.4px;top:38.2px;width:2.0px;height:1.0px;background:#858181;"></div>
<div class="a" style="left:612.4px;top:40.2px;width:2.0px;height:1.0px;background:#858181;"></div>
<div class="a" style="left:612.4px;top:42.2px;width:2.0px;height:1.0px;background:#858181;"></div>
<svg class="a" style="left:619.7px;top:32.0px" width="14.6" height="14.6" viewBox="0 0 14.6 14.6"><circle cx="7.3" cy="7.3" r="5.8999999999999995" fill="none" stroke="#eeeeee" stroke-width="1.1"/><g transform="translate(7.3,7.3)"><path d="M3.2 0 H-2.6 M0.2 -3 L-3 0 L0.2 3" fill="none" stroke="#eeeeee" stroke-width="1.5"/></g></svg>
<svg class="a" style="left:638.7px;top:32.0px" width="14.6" height="14.6" viewBox="0 0 14.6 14.6"><circle cx="7.3" cy="7.3" r="5.8999999999999995" fill="none" stroke="#eeeeee" stroke-width="1.1"/><g transform="translate(7.3,7.3)"><path d="M-3.2 0 H2.6 M-0.2 -3 L3 0 L-0.2 3" fill="none" stroke="#eeeeee" stroke-width="1.5"/></g></svg>
<svg class="a" style="left:657.7px;top:32.0px" width="14.6" height="14.6" viewBox="0 0 14.6 14.6"><circle cx="7.3" cy="7.3" r="5.8999999999999995" fill="none" stroke="#eeeeee" stroke-width="1.1"/><g transform="translate(7.3,7.3)"><path d="M-3.5 -0.2 L0 -3.3 L3.5 -0.2 V3.3 H-3.5 Z" fill="#eeeeee"/><rect x="-0.9" y="1" width="1.8" height="2.3" fill="#5a5656"/></g></svg>
<div class="a" style="left:678.0px;top:32.2px;width:2.0px;height:1.0px;background:#858181;"></div>
<div class="a" style="left:678.0px;top:34.2px;width:2.0px;height:1.0px;background:#858181;"></div>
<div class="a" style="left:678.0px;top:36.2px;width:2.0px;height:1.0px;background:#858181;"></div>
<div class="a" style="left:678.0px;top:38.2px;width:2.0px;height:1.0px;background:#858181;"></div>
<div class="a" style="left:678.0px;top:40.2px;width:2.0px;height:1.0px;background:#858181;"></div>
<div class="a" style="left:678.0px;top:42.2px;width:2.0px;height:1.0px;background:#858181;"></div>
<svg class="a" style="left:686.0px;top:32.5px" width="13.8" height="13.8" viewBox="0 0 13.8 13.8"><circle cx="6.9" cy="6.9" r="5.5" fill="none" stroke="#eeeeee" stroke-width="1.1"/><g transform="translate(6.9,6.9)"><path d="M-1.6 -2.8 V2.8 L2.6 0 Z" fill="#eeeeee"/></g></svg>
</body></html>
